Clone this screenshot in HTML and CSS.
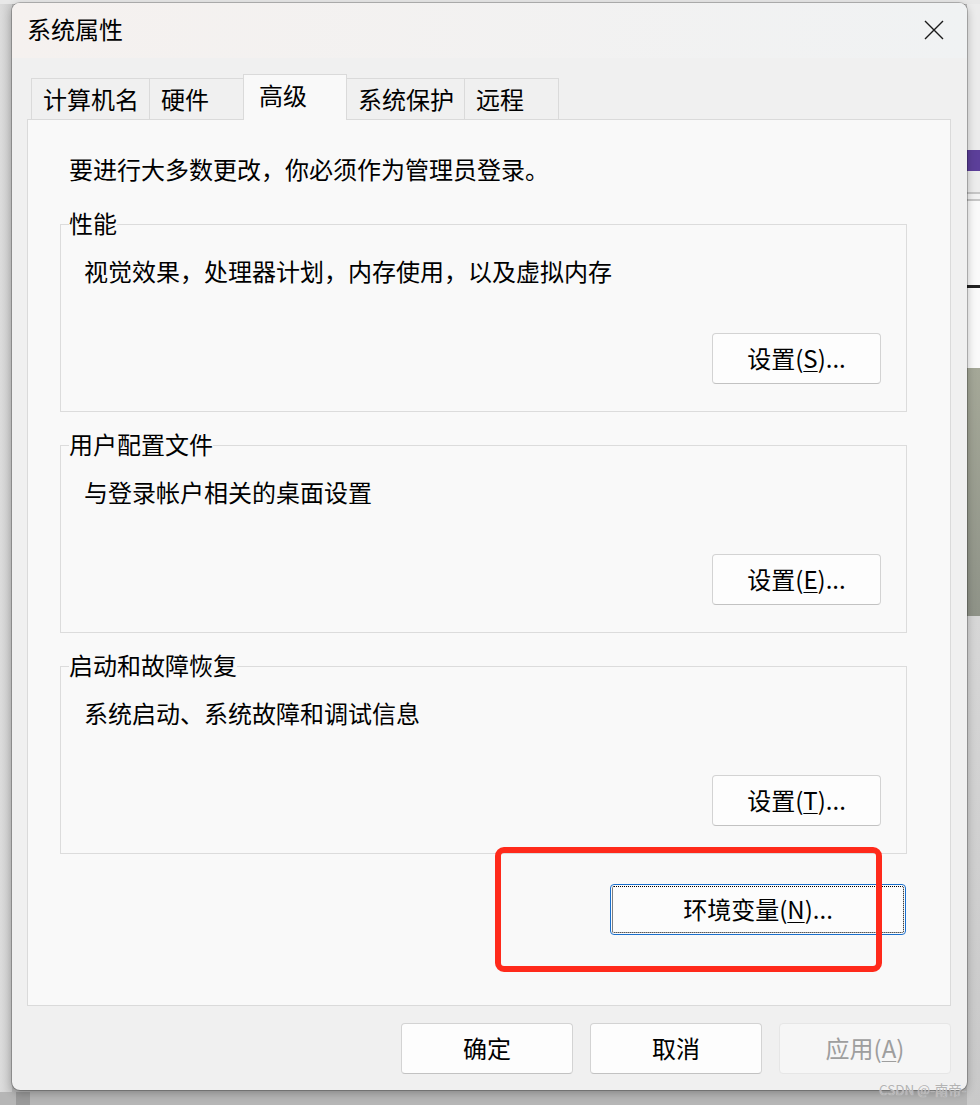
FILE: index.html
```html
<!DOCTYPE html>
<html lang="zh-CN">
<head>
<meta charset="utf-8">
<title>系统属性</title>
<link rel="stylesheet" href="styles.css">
</head>
<body>
<div class="dialog">
  <div class="titlebar">
    <span class="title">系统属性</span>
    <svg class="close" width="20" height="20" viewBox="0 0 20 20" aria-hidden="true">
      <path d="M1 1 L19 19 M19 1 L1 19" stroke="#1a1a1a" stroke-width="1.4" fill="none"/>
    </svg>
  </div>
  <div class="content">
    <div class="tabs">
      <div class="tab">计算机名</div>
      <div class="tab">硬件</div>
      <div class="tab active">高级</div>
      <div class="tab">系统保护</div>
      <div class="tab">远程</div>
    </div>
    <div class="panel">
      <p class="intro">要进行大多数更改，你必须作为管理员登录。</p>
      <fieldset class="group first">
        <legend>性能</legend>
        <p class="desc">视觉效果，处理器计划，内存使用，以及虚拟内存</p>
        <div class="row"><button class="btn set">设置(<u>S</u>)...</button></div>
      </fieldset>
      <fieldset class="group">
        <legend>用户配置文件</legend>
        <p class="desc">与登录帐户相关的桌面设置</p>
        <div class="row"><button class="btn set">设置(<u>E</u>)...</button></div>
      </fieldset>
      <fieldset class="group">
        <legend>启动和故障恢复</legend>
        <p class="desc">系统启动、系统故障和调试信息</p>
        <div class="row"><button class="btn set">设置(<u>T</u>)...</button></div>
      </fieldset>
      <div class="row env-row"><button class="btn env">环境变量(<u>N</u>)...</button></div>
    </div>
  </div>
  <div class="footer">
    <button class="btn foot">确定</button>
    <button class="btn foot">取消</button>
    <button class="btn foot disabled">应用(<u>A</u>)</button>
  </div>
</div>
<div class="annot"></div>
<div class="watermark">CSDN @-南帝-</div>
</body>
</html>
```
FILE: styles.css
```css
html, body {
  margin: 0;
  padding: 0;
}
body {
  position: relative;
  width: 980px;
  height: 1105px;
  overflow: hidden;
  font-family: "Noto Sans CJK SC", "Microsoft YaHei", sans-serif;
  color: #000;
  background:
    linear-gradient(#e8e8e8, #e8e8e8) 0 0 / 100% 4px no-repeat,
    linear-gradient(to bottom,
      #ececec 0, #ececec 150px,
      #5c3f9a 150px, #5c3f9a 171px,
      #ededed 171px, #ededed 192px,
      #c6c6c6 192px, #c6c6c6 194px,
      #f3f3f3 194px, #f3f3f3 199px,
      #c6c6c6 199px, #c6c6c6 201px,
      #fafafa 201px, #fafafa 285px,
      #222 285px, #222 288px,
      #fafafa 288px, #fafafa 368px,
      #a5a898 368px, #8f9388 616px,
      #d7d7d7 616px, #c9c9c9 1105px) right 0 top 0 / 13px 100% no-repeat,
    linear-gradient(to right, #dcdcdc, #cdcdcd) 0 0 / 12px 1092px no-repeat,
    linear-gradient(#9a9a9a, #9a9a9a) 16px 1092px / 14px 13px no-repeat,
    #b6b6b6;
}

.dialog {
  margin: 3px 0 0 12px;
  width: 955px;
  height: 1087px;
  border-radius: 8px;
  background: #f0f0f0;
  box-shadow: 0 0 0 1px rgba(0, 0, 0, 0.22), 0 3px 10px rgba(0, 0, 0, 0.28);
  overflow: hidden;
  display: flex;
  flex-direction: column;
}

.titlebar {
  box-sizing: border-box;
  height: 55px;
  flex: none;
  display: flex;
  align-items: center;
  justify-content: space-between;
  padding: 0 23px 4px 15px;
  background: linear-gradient(to right, #f5f1ef, #f0f2f3);
}
.title {
  font-size: 24px;
  line-height: 32px;
}
.close {
  display: block;
  margin-top: 2px;
}

.content {
  flex: 1;
  display: flex;
  flex-direction: column;
  padding: 16px 16px 0 15px;
  min-height: 0;
}

.tabs {
  height: 45px;
  flex: none;
  display: flex;
  align-items: flex-end;
  padding-left: 4px;
}
.tab {
  box-sizing: border-box;
  height: 41px;
  min-width: 95px;
  padding: 4px 10px 4px 11px;
  margin-right: -1px;
  border: 1px solid #dadada;
  border-bottom: none;
  background: #f0f0f0;
  font-size: 24px;
  line-height: 32px;
  white-space: nowrap;
}
.tab.active {
  position: relative;
  z-index: 1;
  height: 46px;
  min-width: 104px;
  padding: 4px 11px 9px 15px;
  margin-bottom: -1px;
  background: #f9f9f9;
}

.panel {
  flex: 1;
  border: 1px solid #dadada;
  background: #f9f9f9;
  padding: 33px 43px 0 32px;
  font-size: 24px;
}

.intro {
  margin: 0 0 0 9px;
  line-height: 32px;
}

.group {
  margin: 21px 0 0 0;
  padding: 19px 25px 27px 23px;
  border: 1px solid #dcdcdc;
  min-width: 0;
}
.group.first {
  margin-top: 27px;
}
.group legend {
  margin-left: -15px;
  padding: 0;
  font-size: 24px;
  line-height: 24px;
  position: relative;
  top: -1px;
}
.desc {
  margin: 0;
  line-height: 32px;
}

.row {
  display: flex;
  justify-content: flex-end;
  margin-top: 46px;
}

.btn {
  box-sizing: border-box;
  height: 51px;
  padding: 0 0 2px;
  border: 1px solid #d3d3d3;
  border-bottom-color: #c2c2c2;
  border-radius: 4px;
  background: #fdfdfd;
  font-family: inherit;
  font-size: 24px;
  line-height: 32px;
  color: #000;
}
.btn u {
  text-underline-offset: 3px;
  text-decoration-thickness: 1px;
}
.set {
  width: 169px;
}

.env-row {
  margin-top: 30px;
  margin-right: 1px;
}
.env {
  width: 296px;
  border: 1px solid #1a6fcc;
  outline: 1px dotted #000;
  outline-offset: -3px;
  background: #fcfcfc;
}

.footer {
  height: 84px;
  flex: none;
  box-sizing: border-box;
  display: flex;
  justify-content: flex-end;
  gap: 17px;
  padding: 17px 16px 16px 0;
}
.foot {
  width: 172px;
}
.foot.disabled {
  background: #f6f6f6;
  border-color: #e6e6e6;
  color: #9e9e9e;
}

.annot {
  position: absolute;
  left: 495px;
  top: 847px;
  width: 387px;
  height: 125px;
  box-sizing: border-box;
  border: 6px solid #ff2a1b;
  border-radius: 9px;
}

.watermark {
  position: absolute;
  left: 879px;
  top: 1080px;
  font-family: "Noto Sans CJK SC", "Liberation Sans", sans-serif;
  font-size: 13.5px;
  line-height: 18px;
  color: #b3b3b3;
  text-shadow: 0 0 1px rgba(255, 255, 255, 0.8);
  white-space: nowrap;
}
```
